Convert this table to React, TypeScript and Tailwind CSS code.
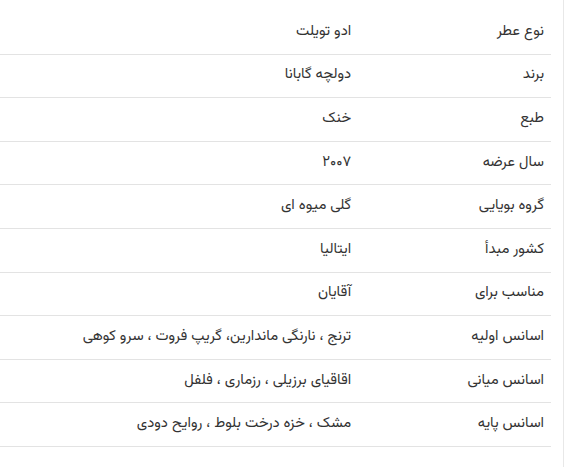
import React from 'react';

// ─ Spec rows ─────────────────────────────────────────────────────────────────
const specs: { label: string; value: string }[] = [
  { label: 'نوع عطر', value: 'ادو تویلت' },
  { label: 'برند', value: 'دولچه گابانا' },
  { label: 'طبع', value: 'خنک' },
  { label: 'سال عرضه', value: '۲۰۰۷' },
  { label: 'گروه بویایی', value: 'گلی میوه ای' },
  { label: 'کشور مبدأ', value: 'ایتالیا' },
  { label: 'مناسب برای', value: 'آقایان' },
  { label: 'اسانس اولیه', value: 'ترنج ، نارنگی ماندارین، گریپ فروت ، سرو کوهی' },
  { label: 'اسانس میانی', value: 'اقاقیای برزیلی ، رزماری ، فلفل' },
  { label: 'اسانس پایه', value: 'مشک ، خزه درخت بلوط ، روایح دودی' },
];

export default function App() {
  return (
    <div
      dir="rtl"
      className="w-[574px] h-[467px] bg-white flex overflow-hidden text-[14.8px] text-[#333]"
      style={{ fontFamily: 'Vazirmatn, "DejaVu Sans", "Noto Sans", sans-serif' }}
    >
      {/* right gutter with divider */}
      <div className="w-[10px] shrink-0" />
      <div className="w-px shrink-0 bg-[#e8e8e8]" />
      <div className="w-[12px] shrink-0" />

      <div className="flex-1 pt-[11px]">
        {specs.map((s) => (
          <div key={s.label} className="flex h-[43.6px] items-center border-b border-[#e3e3e3]">
            <div className="w-[35%] shrink-0 px-[7px] leading-none">{s.label}</div>
            <div className="flex-1 px-[7px] leading-none">{s.value}</div>
          </div>
        ))}
      </div>
    </div>
  );
}
